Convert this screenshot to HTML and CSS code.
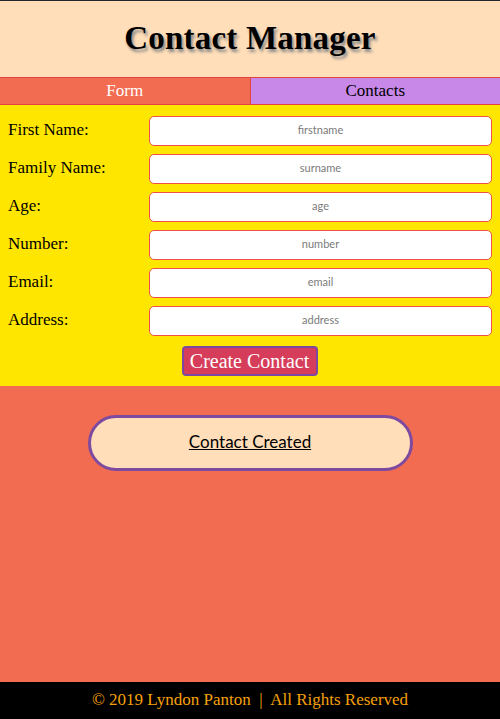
FILE: index.html
```html
<!DOCTYPE html>
<html lang="en">
<head>
<meta charset="utf-8">
<title>Contact Manager</title>
<link rel="stylesheet" href="styles.css">
</head>
<body>
<div class="page">
  <header class="header">
    <h1 class="title">Contact Manager</h1>
  </header>
  <nav class="tabs">
    <div class="tab tab-form">Form</div>
    <div class="tab tab-contacts">Contacts</div>
  </nav>
  <section class="form-section">
    <form class="form">
      <label class="label" for="fn">First Name:</label>
      <input class="field" id="fn" placeholder="firstname">
      <label class="label" for="sn">Family Name:</label>
      <input class="field" id="sn" placeholder="surname">
      <label class="label" for="ag">Age:</label>
      <input class="field" id="ag" placeholder="age">
      <label class="label" for="nu">Number:</label>
      <input class="field" id="nu" placeholder="number">
      <label class="label" for="em">Email:</label>
      <input class="field" id="em" placeholder="email">
      <label class="label" for="ad">Address:</label>
      <input class="field" id="ad" placeholder="address">
    </form>
    <div class="actions">
      <button class="create" type="button">Create Contact</button>
    </div>
  </section>
  <main class="result">
    <div class="pill"><a class="pill-link" href="#">Contact Created</a></div>
  </main>
  <footer class="footer">© 2019 Lyndon Panton &nbsp;|&nbsp; All Rights Reserved</footer>
</div>
</body>
</html>
```
FILE: styles.css
```css
* { box-sizing: border-box; }
html, body { margin: 0; padding: 0; }
body {
  font-family: "Liberation Serif", "DejaVu Serif", serif;
  background: #000;
}
.page {
  min-height: 100vh;
  display: flex;
  flex-direction: column;
  border-top: 1px solid #23262b;
}
.header {
  background: #ffdeb9;
  height: 76px;
  display: flex;
  align-items: center;
  justify-content: center;
}
.title {
  margin: 0;
  font-size: 33px;
  font-weight: bold;
  color: #000;
  text-shadow: 2px 3px 3px #8a8a8a;
  letter-spacing: 0.2px;
  padding-bottom: 2px;
}
.tabs {
  display: flex;
  height: 28px;
  border-top: 1px solid #e2453f;
  border-bottom: 1px solid #e2453f;
}
.tab {
  flex: 1;
  display: flex;
  align-items: center;
  justify-content: center;
  font-size: 17px;
}
.tab-form {
  background: #f26c52;
  color: #fff;
  border-right: 1px solid #e2453f;
}
.tab-contacts {
  background: #c788e8;
  color: #000;
}
.form-section {
  background: #ffe600;
  padding: 11px 8px 10px 8px;
}
.form {
  display: grid;
  grid-template-columns: 141px 1fr;
  row-gap: 8px;
  align-items: center;
  margin: 0;
}
.label {
  font-size: 17px;
  color: #000;
  padding-bottom: 2px;
}
.field {
  height: 30px;
  width: 100%;
  border: 1px solid #f0504a;
  border-radius: 5px;
  background: #fff;
  text-align: center;
  font-family: "Lato", "Open Sans", sans-serif;
  font-size: 11px;
  color: #333;
  padding: 0 6px 3px 6px;
  outline: none;
}
.field::placeholder { color: #7a7a7a; }
.actions {
  display: flex;
  justify-content: center;
  margin-top: 10px;
  padding-right: 1px;
}
.create {
  width: 136px;
  height: 30px;
  background: #d63d5a;
  color: #fff;
  border: 2px solid #7b4aa0;
  border-radius: 4px;
  font-family: "Liberation Serif", "DejaVu Serif", serif;
  font-size: 20px;
  padding: 0;
}
.result {
  flex: 1;
  background: #f26c52;
  padding-top: 29px;
  display: flex;
  justify-content: center;
  align-items: flex-start;
}
.pill {
  width: 325px;
  height: 56px;
  background: #ffdeb9;
  border: 3px solid #7e4aa0;
  border-radius: 28px;
  display: flex;
  align-items: center;
  justify-content: center;
  padding-bottom: 4px;
}
.pill-link {
  font-family: "Lato", "Open Sans", sans-serif;
  font-size: 17px;
  color: #000;
  text-decoration: underline;
}
.footer {
  height: 37px;
  background: #000;
  color: #f5a00a;
  font-size: 17px;
  display: flex;
  align-items: center;
  justify-content: center;
  padding-bottom: 2px;
}
```
